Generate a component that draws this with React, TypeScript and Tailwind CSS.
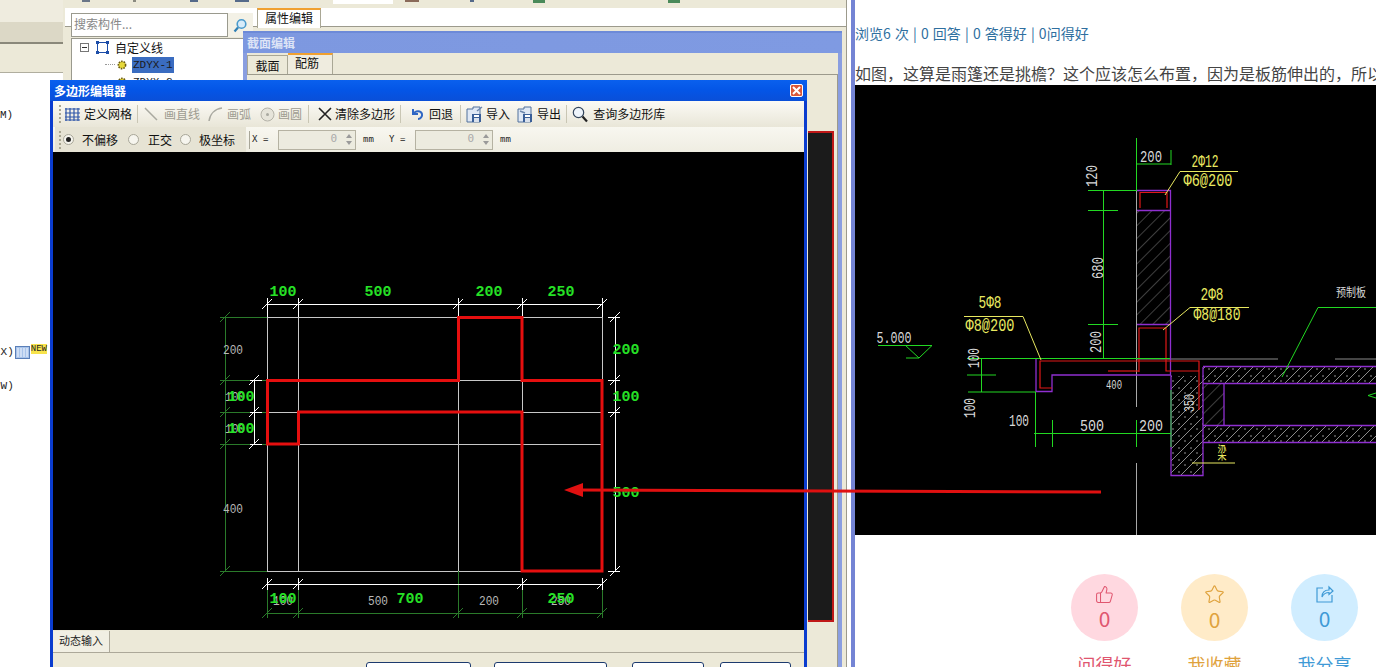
import { Star, ThumbsUp } from "lucide-react"
import { ReactNode } from "react"

const CJK = "font-['Noto_Sans_CJK_SC','Liberation_Sans',sans-serif]"

type CadTextProps = {
  x: number
  y: number
  w: number
  size?: number
  fill: string
  bold?: boolean
  rotate?: boolean
  children: string
}

// narrow CAD style lettering, squeezed to the measured width
const CadText = ({ x, y, w, size = 14, fill, bold, rotate, children }: CadTextProps) => (
  <text
    x={x}
    y={y}
    fill={fill}
    fontSize={size}
    fontFamily="'Liberation Mono', 'Noto Sans CJK SC', monospace"
    fontWeight={bold ? 700 : 400}
    textAnchor="middle"
    dominantBaseline="central"
    textLength={w}
    lengthAdjust="spacingAndGlyphs"
    transform={rotate ? `rotate(-90 ${x} ${y})` : undefined}
  >
    {children}
  </text>
)

const Ticks = ({ points, color }: { points: [number, number][]; color: string }) => (
  <>
    {points.map(([x, y]) => (
      <path key={`${x}-${y}`} d={`M${x - 5} ${y + 5}L${x + 5} ${y - 5}`} stroke={color} strokeWidth="1" />
    ))}
  </>
)

const PolygonDrawing = () => {
  const green = "#2a7a2a"
  const bright = "#26e226"
  const gray = "#b8b8b8"
  return (
    <svg viewBox="53 152 751 478" className="block w-full h-full">
      <g stroke="#c8c8c8" strokeWidth="1" shapeRendering="crispEdges">
        <path d="M267.5 317V571M298.5 317V571M458.5 317V571M522.5 317V571M602.5 317V571" />
        <path d="M267 317.5H602M267 380.5H602M267 412.5H602M267 444.5H602M267 571.5H602" />
      </g>
      <g stroke={green} strokeWidth="1" fill="none" shapeRendering="crispEdges">
        <path d="M225.5 317V571M220 317.5H267M220 380.5H267M220 412.5H267M220 444.5H267M220 571.5H267" />
        <path d="M267 613.5H602M267.5 584V618M298.5 584V618M458.5 571V618M522.5 584V618M602.5 584V618" />
      </g>
      <Ticks color={green} points={[[225, 317], [225, 380], [225, 412], [225, 444], [225, 571], [267, 613], [298, 613], [458, 613], [522, 613], [602, 613]]} />
      <g stroke="#fff" strokeWidth="1" shapeRendering="crispEdges">
        <path d="M267 304.5H602M267.5 298V317M298.5 298V317M458.5 298V317M522.5 298V317M602.5 298V317" />
        <path d="M254.5 380V444M250 380.5H262M250 412.5H262M250 444.5H262" />
        <path d="M615.5 317V571M608 317.5H620M608 380.5H620M608 412.5H620M608 571.5H620" />
        <path d="M267 584.5H602M267.5 578V590M298.5 578V590M522.5 578V590M602.5 578V590" />
      </g>
      <Ticks color="#fff" points={[[267, 304], [298, 304], [458, 304], [522, 304], [602, 304], [254, 380], [254, 412], [254, 444], [615, 317], [615, 380], [615, 412], [615, 571], [267, 584], [298, 584], [522, 584], [602, 584]]} />
      <path
        d="M267.5 380.5H458.5V317.5H522V380.5H602V571H522V412H298.5V444H267.5Z"
        fill="none"
        stroke="#e60f0f"
        strokeWidth="3"
      />
      <CadText x={233} y={350} w={20} size={13} fill={gray}>200</CadText>
      <CadText x={233} y={509} w={20} size={13} fill={gray}>400</CadText>
      <CadText x={235} y={397} w={20} size={13} fill={gray}>100</CadText>
      <CadText x={235} y={429} w={20} size={13} fill={gray}>100</CadText>
      <CadText x={283} y={601} w={20} size={13} fill={gray}>100</CadText>
      <CadText x={378} y={601} w={20} size={13} fill={gray}>500</CadText>
      <CadText x={489} y={601} w={20} size={13} fill={gray}>200</CadText>
      <CadText x={561} y={601} w={20} size={13} fill={gray}>250</CadText>
      <CadText x={283} y={292} w={27} size={15} bold fill={bright}>100</CadText>
      <CadText x={378} y={292} w={27} size={15} bold fill={bright}>500</CadText>
      <CadText x={489} y={292} w={27} size={15} bold fill={bright}>200</CadText>
      <CadText x={561} y={292} w={27} size={15} bold fill={bright}>250</CadText>
      <CadText x={241} y={397} w={27} size={15} bold fill={bright}>100</CadText>
      <CadText x={241} y={429} w={27} size={15} bold fill={bright}>100</CadText>
      <CadText x={626} y={350} w={27} size={15} bold fill={bright}>200</CadText>
      <CadText x={626} y={397} w={27} size={15} bold fill={bright}>100</CadText>
      <CadText x={626} y={493} w={27} size={15} bold fill={bright}>500</CadText>
      <CadText x={283} y={599} w={27} size={15} bold fill={bright}>100</CadText>
      <CadText x={410} y={599} w={27} size={15} bold fill={bright}>700</CadText>
      <CadText x={561} y={599} w={27} size={15} bold fill={bright}>250</CadText>
    </svg>
  )
}

const DetailDrawing = () => {
  const green = "#22d822"
  const purple = "#8f2fd0"
  const red = "#e01818"
  const yellow = "#e8e860"
  const white = "#d8d8d8"
  return (
    <svg viewBox="855 85 521 450" className="block w-full h-full">
      <defs>
        <pattern id="hatch" width="9" height="9" patternUnits="userSpaceOnUse" patternTransform="rotate(45)">
          <line x1="0" y1="0" x2="0" y2="9" stroke="#7c7c7c" strokeWidth="1" />
        </pattern>
        <pattern id="concrete" width="12" height="12" patternUnits="userSpaceOnUse">
          <path d="M0 12L12 0" stroke="#8a8a8a" strokeWidth="1" />
          <circle cx="3" cy="4" r="0.8" fill="#a8a8a8" />
          <circle cx="9" cy="9" r="0.8" fill="#a8a8a8" />
        </pattern>
      </defs>

      <rect x="1137" y="210" width="33" height="114" fill="url(#hatch)" />
      <rect x="1171" y="376" width="32" height="99" fill="url(#concrete)" />
      <rect x="1203" y="367" width="173" height="16" fill="url(#concrete)" />
      <rect x="1203" y="425" width="173" height="17" fill="url(#concrete)" />
      <rect x="1203" y="383" width="21" height="42" fill="url(#hatch)" />

      <path d="M1136.5 138V407M1136.5 463V535" stroke="#a8a8a8" strokeWidth="1" fill="none" />
      <path d="M1136 359H1278M1335 359H1376" stroke="#8a8a8a" strokeWidth="1" fill="none" />

      <g stroke={purple} strokeWidth="1.3" fill="none">
        <path d="M1137 190.5H1170.5V375M1137 210.5H1170M1137 324.5H1170" />
        <path d="M1036 359V391.5H1052V375H1171" />
        <path d="M1171 375V475.5H1203V367M1203 366.5H1376M1203 383.5H1376M1203 425.5H1376M1203 442.5H1376M1224 383V425" />
      </g>

      <g stroke={red} strokeWidth="1.2" fill="none">
        <path d="M1140 208V192.5H1167V208" />
        <path d="M1139 372V328H1166V371H1199" />
        <path d="M1052 388H1040V361H1199V410" />
        <path d="M1108 371H1139" />
      </g>

      <g stroke={green} strokeWidth="1" fill="none">
        <path d="M1136.5 138V190M1136 164H1171M1171 150V165" />
        <path d="M1088 190.5H1137M1103.5 190V358M1088 210.5H1118M1088 324.5H1118" />
        <path d="M967 358.5H1170M981.5 358V392M967 375H996M968 392H1036" />
        <path d="M878 345.5H932L919 358H906M905 345L919 358" />
        <path d="M1034 433.5H1171M1035.5 392V447M1052.5 420V447M1136.5 420V447M1171 390V447" />
        <path d="M1376 307.5H1318L1282 377" />
        <path d="M1376 393L1368 395.5L1376 398" />
      </g>

      <g stroke={yellow} strokeWidth="1" fill="none">
        <path d="M1238 171.5H1180L1165 195" />
        <path d="M1249 307.5H1190L1163 330" />
        <path d="M964 316.5H1023L1041 360" />
        <path d="M1192 463H1235" />
      </g>

      <CadText x={1151} y={157} w={22} size={17} fill={white}>200</CadText>
      <CadText x={1092} y={176} w={22} size={17} rotate fill={white}>120</CadText>
      <CadText x={1098} y={268} w={22} size={17} rotate fill={white}>680</CadText>
      <CadText x={1096} y={342} w={22} size={17} rotate fill={white}>200</CadText>
      <CadText x={974} y={358} w={20} size={17} rotate fill={white}>100</CadText>
      <CadText x={970} y={408} w={20} size={17} rotate fill={white}>100</CadText>
      <CadText x={1019} y={421} w={20} size={17} fill={white}>100</CadText>
      <CadText x={1092} y={426} w={24} size={17} fill={white}>500</CadText>
      <CadText x={1151} y={426} w={24} size={17} fill={white}>200</CadText>
      <CadText x={1114} y={385} w={16} size={13} fill={white}>400</CadText>
      <CadText x={1190} y={403} w={18} size={15} rotate fill={white}>350</CadText>
      <CadText x={894} y={339} w={35} size={16} fill={white}>5.000</CadText>
      <CadText x={1351} y={294} w={30} size={12} fill={white}>预制板</CadText>

      <CadText x={1205} y={162} w={27} size={19} fill={yellow}>2Φ12</CadText>
      <CadText x={1208} y={181} w={49} size={19} fill={yellow}>Φ6@200</CadText>
      <CadText x={1212} y={295} w={23} size={19} fill={yellow}>2Φ8</CadText>
      <CadText x={1217} y={315} w={47} size={19} fill={yellow}>Φ8@180</CadText>
      <CadText x={990} y={303} w={23} size={19} fill={yellow}>5Φ8</CadText>
      <CadText x={990} y={326} w={49} size={19} fill={yellow}>Φ8@200</CadText>
      <CadText x={1222} y={454} w={9} size={17} fill={yellow}>梁</CadText>
    </svg>
  )
}

const FloppyIcon = ({ out }: { out?: boolean }) => (
  <svg width="17" height="17" viewBox="0 0 17 17">
    <path d="M1 3H7V1H14V16H1Z" fill="#dfe8f5" stroke="#50709c" />
    <rect x="6" y="8" width="9" height="8" fill="#3a5f98" />
    <rect x="8" y="12" width="5" height="4" fill="#d8e0ec" />
    <rect x="8" y="9" width="5" height="2" fill="#fff" />
    <path d={out ? "M3 5L8 7" : "M16 1L11 5"} stroke="#6b86ad" strokeWidth="1.5" />
  </svg>
)

const ToolSep = () => <span className="w-px h-[18px] bg-[#c9c6b4] mx-[5px] shrink-0" />

const Grip = () => (
  <span className="flex flex-col gap-[2px] w-[3px] shrink-0">
    {[0, 1, 2, 3, 4].map((i) => (
      <span key={i} className="w-[2px] h-[2px] bg-[#a9a692]" />
    ))}
  </span>
)

const ToolItem = ({ icon, label, muted }: { icon: ReactNode; label: string; muted?: boolean }) => (
  <div className={`flex items-center gap-[3px] ${muted ? "text-[#9d9b90]" : "text-[#111]"}`}>
    {icon}
    <span>{label}</span>
  </div>
)

const Spinner = () => (
  <div className="flex items-center justify-end w-[78px] h-[20px] border border-[#b5b2a2] bg-[#ecebdf] text-[#aaa] pl-1 text-[11px]">
    <span className="mr-[6px]">0</span>
    <span className="flex flex-col justify-center gap-[3px] w-[12px] items-center">
      <span className="w-0 h-0 border-x-[3px] border-x-transparent border-b-[4px] border-b-[#9a9a9a]" />
      <span className="w-0 h-0 border-x-[3px] border-x-transparent border-t-[4px] border-t-[#9a9a9a]" />
    </span>
  </div>
)

const Radio = ({ on }: { on?: boolean }) => (
  <span className="w-[11px] h-[11px] rounded-full border border-[#a8a698] bg-[#f6f5ee] flex items-center justify-center shrink-0">
    {on && <span className="w-[5px] h-[5px] rounded-full bg-[#222]" />}
  </span>
)

const PolygonEditor = () => (
  <div className={`absolute left-[50px] top-[80px] w-[757px] h-[600px] flex flex-col border-x-[3px] border-x-[#0a3ccf] ${CJK}`}>
    <div className="h-[21px] shrink-0 -mx-[3px] bg-gradient-to-b from-[#0a60ee] via-[#0455e6] to-[#0a4fd8] flex items-center justify-between pl-[4px] pr-[4px]">
      <span className="text-[12px] font-bold text-white">多边形编辑器</span>
      <span className="w-[13px] h-[13px] rounded-[2px] border border-white bg-[#d9583a] flex items-center justify-center">
        <svg width="9" height="9" viewBox="0 0 9 9">
          <path d="M1 1L8 8M8 1L1 8" stroke="#fff" strokeWidth="2" />
        </svg>
      </span>
    </div>
    <div className="h-[26px] shrink-0 bg-gradient-to-b from-[#fbfaf5] to-[#e9e6d8] flex items-center pl-[6px] text-[12px]">
      <Grip />
      <div className="ml-[3px]">
        <ToolItem
          label="定义网格"
          icon={
            <svg width="15" height="15" viewBox="0 0 15 15" className="mr-[1px]">
              <path d="M1 1V14M5 1V14M9 1V14M13 1V14M0 2H15M0 6H15M0 10H15M0 13H15" stroke="#2d55a8" strokeWidth="1.2" />
            </svg>
          }
        />
      </div>
      <ToolSep />
      <ToolItem
        muted
        label="画直线"
        icon={
          <svg width="18" height="16" viewBox="0 0 18 16">
            <path d="M2 2L14 14" stroke="#a9a9a0" strokeWidth="1.5" />
          </svg>
        }
      />
      <span className="w-[8px]" />
      <ToolItem
        muted
        label="画弧"
        icon={
          <svg width="16" height="16" viewBox="0 0 16 16">
            <path d="M1 15C2 8 7 3 14 2" fill="none" stroke="#a9a9a0" strokeWidth="1.5" />
          </svg>
        }
      />
      <span className="w-[9px]" />
      <ToolItem
        muted
        label="画圆"
        icon={
          <svg width="15" height="15" viewBox="0 0 15 15">
            <circle cx="7.5" cy="7.5" r="6.5" fill="#e6e4da" stroke="#b4b2a8" />
            <circle cx="7.5" cy="7.5" r="1.5" fill="#a9a9a0" />
          </svg>
        }
      />
      <span className="w-[1px]" />
      <ToolSep />
      <span className="w-[4px]" />
      <ToolItem
        label="清除多边形"
        icon={
          <svg width="14" height="14" viewBox="0 0 14 14">
            <path d="M1 1L13 13M13 1L1 13" stroke="#222" strokeWidth="1.6" />
          </svg>
        }
      />
      <ToolSep />
      <span className="w-[4px]" />
      <ToolItem
        label="回退"
        icon={
          <svg width="14" height="14" viewBox="0 0 14 14" className="mr-[2px]">
            <path d="M3 2V7H8M3.5 7C5 3.5 11 3 12 7C12.6 9.5 10.5 12 8 12" fill="none" stroke="#2f66c4" strokeWidth="2" />
          </svg>
        }
      />
      <span className="w-[2px]" />
      <ToolSep />
      <ToolItem label="导入" icon={<FloppyIcon />} />
      <span className="w-[7px]" />
      <ToolItem label="导出" icon={<FloppyIcon out />} />
      <ToolSep />
      <ToolItem
        label="查询多边形库"
        icon={
          <svg width="16" height="17" viewBox="0 0 16 17" className="mr-[2px]">
            <circle cx="6.5" cy="6.5" r="5.2" fill="#eef4fb" stroke="#34465c" strokeWidth="1.2" />
            <path d="M10.5 10.5L15 15.5" stroke="#222" strokeWidth="2.2" />
          </svg>
        }
      />
    </div>
    <div className="h-[25px] shrink-0 bg-gradient-to-b from-[#f8f7f0] to-[#efede2] flex items-center pl-[2px] text-[12px] text-[#111]">
      <div className="flex items-center h-full bg-[#e6e3d4] pr-[11px] pl-[4px]">
        <Grip />
        <span className="ml-[1px]"><Radio on /></span>
        <span className="ml-[8px]">不偏移</span>
        <span className="ml-[10px]"><Radio /></span>
        <span className="ml-[9px]">正交</span>
        <span className="ml-[8px]"><Radio /></span>
        <span className="ml-[8px]">极坐标</span>
      </div>
      <span className="w-px h-[18px] bg-[#a8a698] ml-[3px] mr-[2px]" />
      <div className="flex items-center font-['DejaVu_Sans_Mono',monospace] text-[9px] text-[#222]">
        <span className="w-[26px]">X =</span>
        <Spinner />
        <span className="ml-[7px] w-[26px]">mm</span>
        <span className="w-[26px]">Y =</span>
        <Spinner />
        <span className="ml-[7px]">mm</span>
      </div>
    </div>
    <div className="h-[478px] shrink-0 bg-black">
      <PolygonDrawing />
    </div>
    <div className="h-[23px] shrink-0 bg-[#ece9d8] border-b border-b-[#aca899] flex items-end">
      <span className="h-[21px] px-[6px] bg-[#f1efe3] border-r border-r-[#aca899] text-[11px] leading-[19px] text-[#222]">动态输入</span>
    </div>
    <div className="flex-1 bg-[#ece9d8] flex pl-[313px] pt-[9px]">
      <span className="w-[105px] h-[24px] rounded-[3px] border border-[#1c3a6e] bg-white" />
      <span className="w-[113px] h-[24px] rounded-[3px] border border-[#1c3a6e] bg-white ml-[23px]" />
      <span className="w-[72px] h-[24px] rounded-[3px] border border-[#1c3a6e] bg-white ml-[25px]" />
      <span className="w-[71px] h-[24px] rounded-[3px] border border-[#1c3a6e] bg-white ml-[16px]" />
    </div>
  </div>
)

const SectionWindow = () => (
  <div className={`absolute left-[243px] top-[31px] w-[599px] h-[636px] flex flex-col border-x-[4px] border-x-[#8a9ee0] ${CJK}`}>
    <div className="h-[22px] shrink-0 -mx-[4px] bg-gradient-to-r from-[#7d98e0] to-[#7f9ae2] border-t-2 border-t-[#6d8ad8] flex items-center pl-[4px]">
      <span className="text-[12px] font-bold text-[#dde4f6]">截面编辑</span>
    </div>
    <div className="h-[22px] shrink-0 bg-[#ece9d8] flex items-end text-[12px] text-[#111] border-b border-b-[#9c9a8c]">
      <span className="w-[41px] h-[19px] bg-[#ece9d8] border border-[#a9a795] border-b-0 text-center leading-[20px]">截面</span>
      <span className="w-[45px] h-[21px] bg-[#efecdf] border-t-2 border-t-[#f0a030] border-r border-r-[#a9a795] pl-[7px] leading-[15px]">配筋</span>
    </div>
    <div className="flex-1 bg-[#ece9d8] border-r border-r-[#9c9a8c] flex justify-end pt-[56px] pb-[45px] pr-[3px]">
      <div className="w-[26px] bg-[#1b1b1b] border-2 border-l-0 border-[#c01818]" />
    </div>
  </div>
)

const Sidebar = () => (
  <div className="w-[65px] h-full shrink-0 flex flex-col pr-[2px] bg-[#ece9d8] font-['Liberation_Mono',monospace] text-[11px] text-[#222] overflow-hidden">
    <div className="h-[22px] bg-[#efecdf]" />
    <div className="h-[22px] bg-[#dcd8c6] border-b-2 border-b-[#8a887a]" />
    <div className="h-[28px] bg-[#ece9d8]" />
    <div className="flex-1 bg-white border-t border-t-[#b0ae9f] relative">
      <span className="absolute left-0 top-[34px]">M)</span>
      <div className="absolute -left-[6px] top-[271px] flex items-center">
        <span>(X)</span>
        <svg width="15" height="13" viewBox="0 0 15 13" className="ml-[1px]">
          <rect x="0.5" y="0.5" width="14" height="12" fill="#a9c4ea" stroke="#5a7fb8" />
          <path d="M3 2V11M6 2V11M9 2V11M12 2V11" stroke="#f4f8ff" strokeWidth="1" />
        </svg>
        <span className="bg-[#f7e34c] text-[9px] leading-[10px] -mt-[6px] ml-[1px]">NEW</span>
      </div>
      <span className="absolute -left-[6px] top-[305px]">(W)</span>
    </div>
  </div>
)

const TreeRow = ({ label, active }: { label: string; active?: boolean }) => (
  <div className="flex items-center h-[17px] pl-[33px]">
    <span className="w-[10px] border-t border-dotted border-t-[#999]" />
    <svg width="12" height="12" viewBox="0 0 12 12" className="ml-[1px]">
      <circle cx="6" cy="6" r="3.6" fill="#e6d83a" stroke="#6b5b10" strokeWidth="1.6" strokeDasharray="1.6 1" />
    </svg>
    <span className={`ml-[4px] px-[1px] font-['Liberation_Mono',monospace] text-[11px] leading-[16px] text-[#1a1a1a] ${active ? "bg-[#3a6cc0]" : ""}`}>
      {label}
    </span>
  </div>
)

const MainWindow = () => (
  <div className={`flex-1 h-full bg-[#ece9d8] flex flex-col border-r border-r-[#9c9a8c] ${CJK}`}>
    {/* clipped icons of the toolbar above */}
    <div className="h-[8px] shrink-0 flex items-start pl-[17px]">
      <span className="w-[8px] h-[2px] bg-[#6a7688]" />
      <span className="w-[3px] h-[2px] bg-[#8a8a80] ml-[43px]" />
      <span className="w-[8px] h-[2px] bg-[#556a8a] ml-[54px]" />
      <span className="w-[14px] h-[2px] bg-[#556a8a] ml-[37px]" />
      <span className="w-[60px] h-[4px] bg-white ml-[84px]" />
      <span className="w-[14px] h-[2px] bg-[#8a6a5a] ml-[12px]" />
      <span className="w-[4px] h-[2px] bg-[#556a8a] ml-[51px]" />
      <span className="w-[12px] h-[3px] bg-[#4a8a5a] ml-[59px]" />
      <span className="w-[12px] h-[3px] bg-[#4a8a5a] ml-[123px]" />
    </div>
    <div className="flex h-[19px] shrink-0 bg-white border-b border-b-[#9c9a8c] pl-[192px] pr-[5px]">
      <span className="w-[64px] h-[20px] bg-white border-t-2 border-t-[#f0a030] border-x border-x-[#a9a795] text-[12px] text-[#111] text-center leading-[15px]">属性编辑</span>
    </div>
    <div className="flex-1 flex flex-col pl-[6px]">
      <div className="flex items-start -mt-[14px] h-[24px]">
        <div className="w-[157px] h-[24px] bg-white border border-[#9a9a8e] text-[12px] text-[#888] pl-[2px] leading-[20px]">搜索构件...</div>
        <div className="w-[25px] h-[24px] bg-[#f3f1e6] flex items-center justify-center">
          <svg width="15" height="15" viewBox="0 0 15 15">
            <circle cx="8.5" cy="6" r="4.3" fill="#d7ecfa" stroke="#4a9acc" strokeWidth="1.6" />
            <path d="M5 9.5L1.5 13.5" stroke="#2f7fb4" strokeWidth="2.2" />
          </svg>
        </div>
      </div>
      <div className="w-[180px] mt-[1px] flex-1 bg-white border-t border-l border-[#9a9a8e] text-[12px] text-[#111]">
        <div className="flex items-center h-[17px] pl-[8px]">
          <span className="w-[9px] h-[9px] border border-[#777] flex items-center justify-center">
            <span className="w-[5px] h-px bg-[#333]" />
          </span>
          <svg width="15" height="15" viewBox="0 0 15 15" className="ml-[6px]">
            <rect x="2.5" y="2.5" width="10" height="10" fill="none" stroke="#1c4da8" />
            <path d="M1 1H4V4H1ZM11 1H14V4H11ZM1 11H4V14H1ZM11 11H14V14H11Z" fill="#1c4da8" />
          </svg>
          <span className="ml-[5px]">自定义线</span>
        </div>
        <TreeRow label="ZDYX-1" active />
        <TreeRow label="ZDYX-2" />
      </div>
    </div>
  </div>
)

const Stat = ({ bg, color, label, icon }: { bg: string; color: string; label: string; icon: ReactNode }) => (
  <div className="flex flex-col items-center w-[67px]">
    <div className={`w-[67px] h-[67px] rounded-full flex flex-col items-center justify-center ${bg} ${color}`}>
      {icon}
      <span className="text-[21px] leading-[26px] mt-[1px]">0</span>
    </div>
    <span className={`mt-[10px] text-[18px] leading-[26px] whitespace-nowrap ${color}`}>{label}</span>
  </div>
)

export default function App() {
  return (
    <div className="relative w-[1376px] h-[667px] flex overflow-hidden bg-white">
      <div className="relative w-[847px] h-full shrink-0 flex overflow-hidden">
        <Sidebar />
        <MainWindow />
        <SectionWindow />
        <PolygonEditor />
      </div>
      <div className="w-[4px] h-full shrink-0 bg-white" />
      <div className="w-[4px] h-full shrink-0 bg-[#7484d4]" />
      <div className={`flex-1 min-w-0 h-full flex flex-col overflow-hidden ${CJK}`}>
        <div className="h-[24px] shrink-0" />
        <p className="text-[14px] leading-[18px] text-[#2f6f9f] whitespace-nowrap [word-spacing:1px]">浏览6 次 | 0 回答 | 0 答得好 | 0问得好</p>
        <p className="mt-[21px] text-[16px] leading-[20px] text-[#444] whitespace-nowrap">
          如图，这算是雨篷还是挑檐？这个应该怎么布置，因为是板筋伸出的，所以
        </p>
        <div className="h-[450px] shrink-0 bg-black mt-[2px]">
          <DetailDrawing />
        </div>
        <div className="flex pl-[216px] gap-[43px] mt-[39px]">
          <Stat bg="bg-[#ffd8e0]" color="text-[#e0566f]" label="问得好" icon={<ThumbsUp size={19} strokeWidth={1.3} />} />
          <Stat bg="bg-[#ffebc8]" color="text-[#dfa23c]" label="我收藏" icon={<Star size={21} strokeWidth={1.3} />} />
          <Stat
            bg="bg-[#d0edff]"
            color="text-[#3f9ad6]"
            label="我分享"
            icon={
              <svg width="19" height="19" viewBox="0 0 19 19" fill="none" stroke="currentColor" strokeWidth="1.2">
                <path d="M8 3H2V17H17V10" />
                <path d="M7 12C7 7 10 5 14 5V2L18 6L14 9.5V7.5C11 7.5 8.5 9 7 12Z" />
              </svg>
            }
          />
        </div>
      </div>
      {/* red annotation arrow across both windows */}
      <svg className="absolute left-0 top-0 pointer-events-none" width="1376" height="667" viewBox="0 0 1376 667">
        <path d="M1101 492L580 490" stroke="#e01010" strokeWidth="3" />
        <path d="M564 490L583 483V497Z" fill="#e01010" />
      </svg>
    </div>
  )
}
